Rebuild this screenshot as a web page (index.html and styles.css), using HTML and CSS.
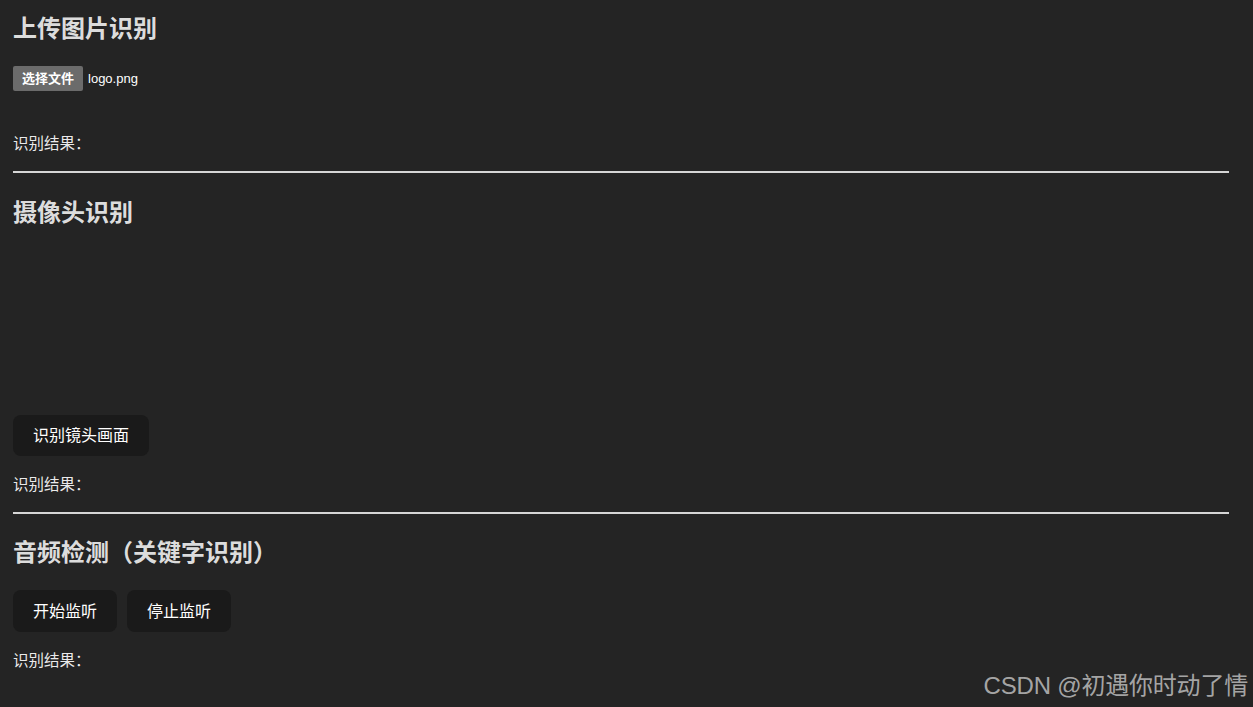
FILE: index.html
```html
<!DOCTYPE html>
<html lang="zh-CN">
<head>
<meta charset="utf-8">
<title>识别</title>
<link rel="stylesheet" href="styles.css">
</head>
<body>
<div class="page">
  <section class="sec sec-upload">
    <h2 class="title">上传图片识别</h2>
    <div class="file-row">
      <span class="file-btn">选择文件</span>
      <span class="file-name">logo.png</span>
    </div>
    <p class="result result-upload">识别结果：</p>
  </section>
  <hr class="rule">
  <section class="sec sec-camera">
    <h2 class="title">摄像头识别</h2>
    <div class="video"></div>
    <div class="btn-row">
      <button class="btn">识别镜头画面</button>
    </div>
    <p class="result">识别结果：</p>
  </section>
  <hr class="rule rule-second">
  <section class="sec sec-audio">
    <h2 class="title">音频检测（关键字识别）</h2>
    <div class="btn-row btn-row-audio">
      <button class="btn">开始监听</button>
      <button class="btn">停止监听</button>
    </div>
    <p class="result">识别结果：</p>
  </section>
</div>
<div class="watermark">CSDN @初遇你时动了情</div>
</body>
</html>
```
FILE: styles.css
```css
html, body {
  margin: 0;
  padding: 0;
  background: #242424;
  height: 100%;
}
body {
  font-family: "Liberation Sans", "Noto Sans CJK SC", sans-serif;
  color: rgba(255, 255, 255, 0.87);
  overflow: hidden;
  position: relative;
}
.page {
  padding: 15px 24px 0 13px;
}
.title {
  margin: 0;
  font-size: 24px;
  line-height: 28px;
  font-weight: 700;
  color: rgba(255, 255, 255, 0.87);
}
.file-row {
  display: flex;
  align-items: center;
  gap: 5px;
  margin-top: 23px;
  height: 25px;
}
.file-btn {
  background: #6b6b6b;
  color: #fff;
  font-size: 13px;
  font-weight: 700;
  border-radius: 2px;
  height: 25px;
  line-height: 25px;
  padding: 0 9px;
}
.file-name {
  font-size: 13px;
  color: #fff;
}
.result {
  margin: 0;
  font-size: 15.5px;
  line-height: 20px;
  color: rgba(255, 255, 255, 0.92);
}
.result-upload {
  margin-top: 43px;
}
.rule {
  margin: 17px 0 0 0;
  border: 0;
  height: 2px;
  background: #d6d6d6;
}
.rule-second {
  margin-top: 17px;
}
.sec-camera .title {
  margin-top: 26px;
}
.sec-audio .title {
  margin-top: 25px;
}
.video {
  height: 188px;
}
.btn-row {
  display: flex;
  gap: 10px;
}
.btn {
  font-family: inherit;
  font-size: 16px;
  font-weight: 400;
  color: #fff;
  background: #1a1a1a;
  border: 1px solid transparent;
  border-radius: 8px;
  padding: 0 19px;
  height: 41px;
  line-height: 39px;
  cursor: pointer;
}
.sec-camera .result {
  margin-top: 19px;
}
.btn-row-audio {
  margin-top: 23px;
}
.btn-row-audio .btn {
  height: 42px;
}
.sec-audio .result {
  margin-top: 19px;
}
.watermark {
  position: absolute;
  right: 5px;
  bottom: 6px;
  font-size: 24px;
  line-height: 30px;
  letter-spacing: -0.2px;
  color: rgba(200, 200, 200, 0.8);
}
```
